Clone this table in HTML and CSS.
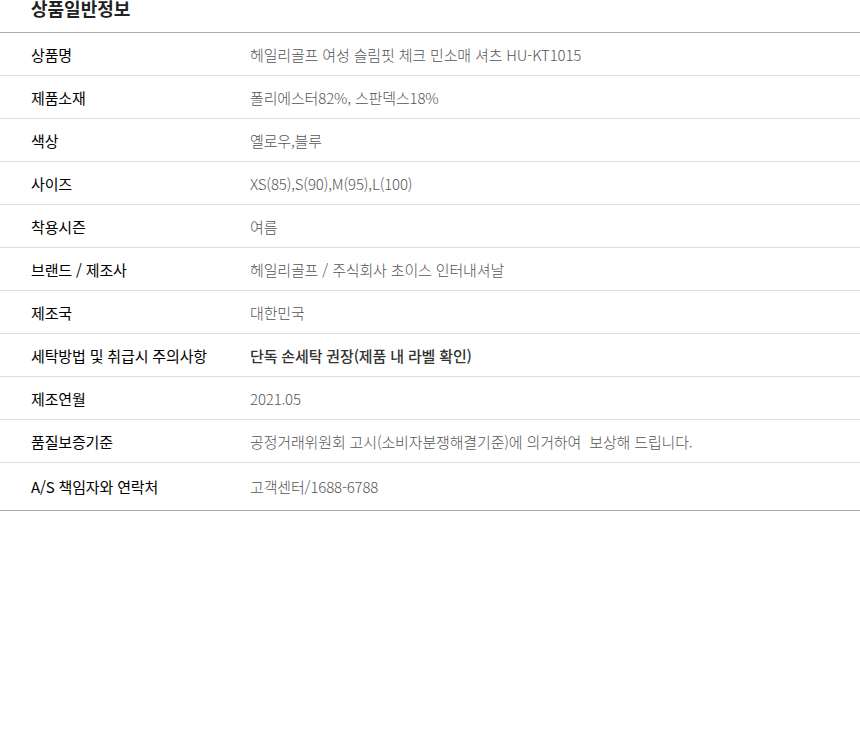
FILE: index.html
```html
<!DOCTYPE html>
<html lang="ko">
<head>
  <meta charset="UTF-8">
  <meta name="viewport" content="width=device-width, initial-scale=1.0">
  <title>상품일반정보</title>
  <link rel="stylesheet" href="styles.css">
</head>
<body>
  <!-- 상품 고시정보 -->
  <div class="info-title">상품일반정보</div>
  <div class="info-table">
    <div class="row"><div class="label">상품명</div><div class="value">헤일리골프 여성 슬림핏 체크 민소매 셔츠 HU-KT1015</div></div>
    <div class="row"><div class="label">제품소재</div><div class="value">폴리에스터82%, 스판덱스18%</div></div>
    <div class="row"><div class="label">색상</div><div class="value">옐로우,블루</div></div>
    <div class="row"><div class="label">사이즈</div><div class="value">XS(85),S(90),M(95),L(100)</div></div>
    <div class="row"><div class="label">착용시즌</div><div class="value">여름</div></div>
    <div class="row"><div class="label">브랜드 / 제조사</div><div class="value">헤일리골프 / 주식회사 초이스 인터내셔날</div></div>
    <div class="row"><div class="label">제조국</div><div class="value">대한민국</div></div>
    <div class="row"><div class="label">세탁방법 및 취급시 주의사항</div><div class="value strong">단독 손세탁 권장(제품 내 라벨 확인)</div></div>
    <div class="row"><div class="label">제조연월</div><div class="value">2021.05</div></div>
    <div class="row"><div class="label">품질보증기준</div><div class="value">공정거래위원회 고시(소비자분쟁해결기준)에 의거하여&nbsp; 보상해 드립니다.</div></div>
    <div class="row last"><div class="label">A/S 책임자와 연락처</div><div class="value">고객센터/1688-6788</div></div>
  </div>
</body>
</html>
```

FILE: styles.css
```css
* { box-sizing: border-box; }
body {
  margin: 0;
  font-family: "Noto Sans CJK KR", "Noto Sans", sans-serif;
  background: #fff;
  color: #222;
}

/* 제목 */
.info-title {
  padding: 0 0 15px 31px;
  font-size: 18px;
  line-height: 17px;
  font-weight: bold;
  color: #222;
}

/* 표 */
.info-table {
  border-top: 1px solid #aaa;
  border-bottom: 1px solid #aaa;
}
.row {
  display: grid;
  grid-template-columns: 250px 1fr;
  align-items: center;
  height: 43px;
  border-bottom: 1px solid #ddd;
  font-size: 15px;
  letter-spacing: -0.15px;
}
.row.last { border-bottom: none; height: 47px; }
.label {
  padding-left: 31px;
  color: #000;
  font-weight: 400;
}
.value {
  color: #555;
  font-weight: 300;
}
.value.strong { color: #333; font-weight: 500; }
```
